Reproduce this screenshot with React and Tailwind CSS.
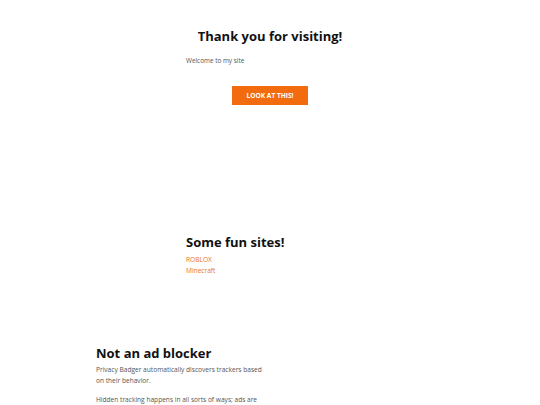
export default function App() {
  return (
    <div className="min-h-screen bg-white font-['Open_Sans',sans-serif] text-[#111]">
      <section className="mx-auto w-[168px] pt-[26px]">
        <h1 className="text-center text-[13px] font-bold leading-[20px]">Thank you for visiting!</h1>
        <p className="mt-[10px] text-[6.4px] leading-[10px] text-[#555]">Welcome to my site</p>
        <div className="mt-[20px] flex justify-center">
          <button className="h-[19px] w-[76px] bg-[#f26b0f] text-[6.6px] font-bold uppercase text-white">
            Look at this!
          </button>
        </div>
      </section>

      <section className="mx-auto mt-[127px] w-[168px]">
        <h2 className="text-[13px] font-bold leading-[20px]">Some fun sites!</h2>
        <ul className="mt-[3px] text-[6.6px] leading-[10.5px] text-[#e8731d]">
          <li><a href="#">ROBLOX</a></li>
          <li><a href="#">Minecraft</a></li>
        </ul>
      </section>

      <section className="mx-auto mt-[67px] w-[348px]">
        <h2 className="text-[13px] font-bold leading-[20px]">Not an ad blocker</h2>
        <div className="w-[168px] text-[6.6px] leading-[10.5px] text-[#555]">
          <p className="mt-[2px]">Privacy Badger automatically discovers trackers based on their behavior.</p>
          <p className="mt-[8.5px]">Hidden tracking happens in all sorts of ways; ads are sometimes used to track you.</p>
        </div>
      </section>
    </div>
  );
}
